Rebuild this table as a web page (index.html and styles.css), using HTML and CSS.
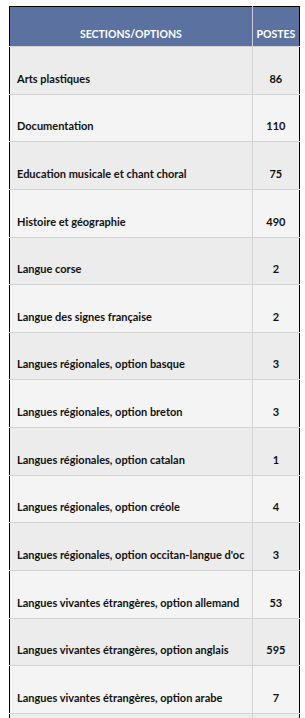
FILE: index.html
```html
<!DOCTYPE html>
<html lang="fr">
<head>
<meta charset="utf-8">
<link rel="stylesheet" href="styles.css">
</head>
<body>
<div class="wrap">
<table class="posts">
<thead>
<tr><th class="c-name">SECTIONS/OPTIONS</th><th class="c-num">POSTES</th></tr>
</thead>
<tbody>
<tr><td class="c-name">Arts plastiques</td><td class="c-num">86</td></tr>
<tr><td class="c-name">Documentation</td><td class="c-num">110</td></tr>
<tr><td class="c-name">Education musicale et chant choral</td><td class="c-num">75</td></tr>
<tr><td class="c-name">Histoire et géographie</td><td class="c-num">490</td></tr>
<tr><td class="c-name">Langue corse</td><td class="c-num">2</td></tr>
<tr><td class="c-name">Langue des signes française</td><td class="c-num">2</td></tr>
<tr><td class="c-name">Langues régionales, option basque</td><td class="c-num">3</td></tr>
<tr><td class="c-name">Langues régionales, option breton</td><td class="c-num">3</td></tr>
<tr><td class="c-name">Langues régionales, option catalan</td><td class="c-num">1</td></tr>
<tr><td class="c-name">Langues régionales, option créole</td><td class="c-num">4</td></tr>
<tr><td class="c-name">Langues régionales, option occitan-langue d'oc</td><td class="c-num">3</td></tr>
<tr><td class="c-name">Langues vivantes étrangères, option allemand</td><td class="c-num">53</td></tr>
<tr><td class="c-name">Langues vivantes étrangères, option anglais</td><td class="c-num">595</td></tr>
<tr><td class="c-name">Langues vivantes étrangères, option arabe</td><td class="c-num">7</td></tr>
<tr><td class="c-name">Langues vivantes étrangères, option chinois</td><td class="c-num">8</td></tr>
</tbody>
</table>
</div>
</body>
</html>
```
FILE: styles.css
```css
html, body {
  margin: 0;
  padding: 0;
  background: #ffffff;
}
.wrap {
  padding: 6px 0 0 9px;
}
.posts {
  border-collapse: collapse;
  width: 291px;
  table-layout: fixed;
  font-family: Lato, "Liberation Sans", sans-serif;
  font-weight: bold;
  font-size: 11px;
  color: #111111;
  border-top: 1px solid #000000;
  border-left: 1px solid #000000;
  border-right: 1px solid #000000;
}
.posts th {
  box-sizing: border-box;
  background: #5b72a0;
  color: #ffffff;
  height: 40px;
  padding: 0 0 6px 0;
  vertical-align: bottom;
  font-size: 10.5px;
  text-align: center;
}
.posts th.c-num {
  border-left: 1px solid #c8cfdc;
}
.posts td {
  height: 47.64px;
  box-sizing: border-box;
  padding: 0 0 9px 7px;
  vertical-align: bottom;
  border-top: 1px solid #d3d3d3;
}
.posts td.c-num {
  text-align: center;
  padding-left: 0;
  border-left: 1px solid #d3d3d3;
}
.posts .c-name {
  width: 241px;
}
.posts .c-num {
  width: 47px;
}
.posts tbody tr:nth-child(odd) td {
  background: #ececec;
}
.posts tbody tr:nth-child(even) td {
  background: #f4f4f4;
}
```
